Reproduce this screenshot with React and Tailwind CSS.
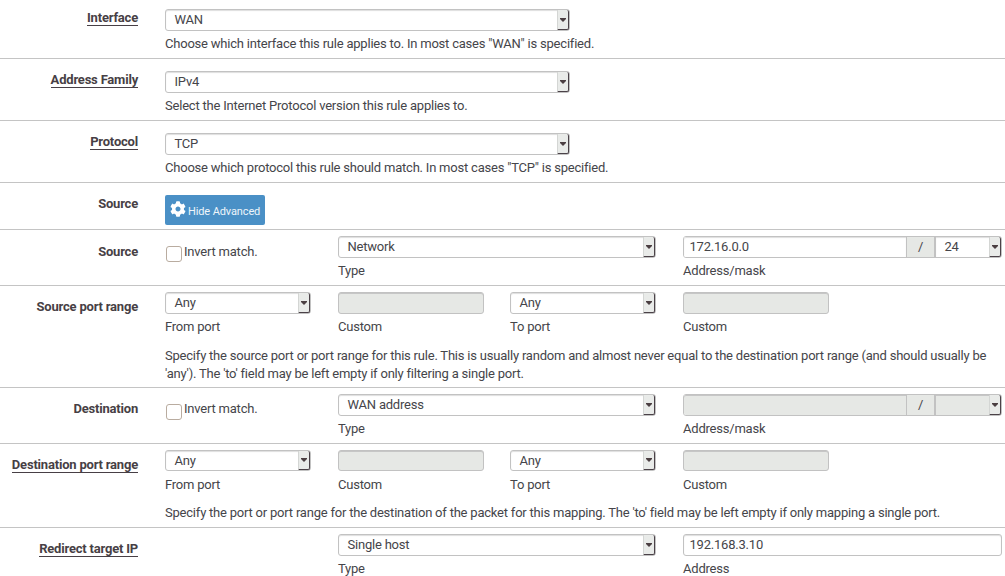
import React from "react";
import { FaCog } from "react-icons/fa";

function Arrow() {
  return (
    <span className="flex h-full w-3 shrink-0 items-center justify-center rounded-r-[2px] border-r border-b border-l border-r-[#4b4248] border-b-[#4b4248] border-l-[#d4d6d4] bg-[#e9ebe9]">
      <svg width="6" height="4" viewBox="0 0 6 4" fill="#4b3f42">
        <path d="M0 0h6v1L3 4L0 1z" />
      </svg>
    </span>
  );
}

function Select({ value, className = "", height = "h-[22px]" }) {
  return (
    <div className={`flex ${height} items-center justify-between rounded-[3px] border border-[#c2c2c2] bg-white pl-[8.5px] shadow-[inset_0_1px_1px_#dedede] ${className}`}>
      <span className="whitespace-nowrap leading-[18px]">{value}</span>
      <Arrow />
    </div>
  );
}

function Input({ value, disabled, className = "", height = "h-[22px]" }) {
  return (
    <div className={`flex ${height} items-center rounded-[3px] border border-[#c2c2c2] pl-[5.5px] leading-[18px] ${disabled ? "bg-[#e6e8e5] shadow-[inset_0_1px_0_#c6c6c6]" : "bg-white shadow-[inset_0_1px_1px_#dedede]"} ${className}`}>
      {value}
    </div>
  );
}

function AddressMask({ address, mask, disabled }) {
  const fill = disabled ? "bg-[#e6e8e5] shadow-[inset_0_1px_0_#c6c6c6]" : "bg-white shadow-[inset_0_1px_1px_#dedede]";
  return (
    <div className="flex h-[22px] w-[319px] rounded-[3px] border border-[#c2c2c2] leading-[18px]">
      <div className={`flex w-[222px] items-center rounded-l-[2px] pl-[5.5px] ${fill}`}>{address}</div>
      <div className="flex w-[30px] items-center justify-center border-r-2 border-l border-[#c2c2c2] bg-[#e6e8e5]">/</div>
      <div className={`flex flex-1 items-center justify-between pl-[8.5px] ${fill}`}>
        <span>{mask}</span>
        <Arrow />
      </div>
    </div>
  );
}

function Field({ caption, className = "", children }) {
  return (
    <div className={className}>
      {children}
      <p className="mt-1 h-[18px] whitespace-nowrap leading-[18px]">{caption}</p>
    </div>
  );
}

function Row({ label, underlined, height, labelPad, pad, last, children }) {
  return (
    <div className={`flex ${height} ${last ? "" : "border-b border-[#c4c4c4]"}`}>
      <div className={`w-[138px] shrink-0 text-right font-bold leading-[15px] tracking-[-0.2px] text-[#473f45] ${labelPad}`}>
        <span className={`inline-block whitespace-nowrap ${underlined ? "border-b border-[#473f45]" : ""}`}>{label}</span>
      </div>
      <div className={`ml-[27px] flex-1 ${pad}`}>{children}</div>
    </div>
  );
}

function InvertMatch({ textPad }) {
  return (
    <div className="flex w-[173px]">
      <span className="mt-[10px] ml-px h-4 w-4 rounded-[3px] border border-[#b9aca0] bg-white" />
      <span className={`ml-[2px] leading-[18px] ${textPad}`}>Invert match.</span>
    </div>
  );
}

function PortRange({ height }) {
  return (
    <div className="flex h-11">
      <Field caption="From port" className="flex w-[173px] flex-col justify-between"><Select value="Any" className="w-[146px]" height={height} /></Field>
      <Field caption="Custom" className="flex w-[172px] flex-col justify-between"><Input disabled className="w-[146px]" height={height} /></Field>
      <Field caption="To port" className="flex w-[173px] flex-col justify-between"><Select value="Any" className="w-[146px]" height={height} /></Field>
      <Field caption="Custom" className="flex flex-col justify-between"><Input disabled className="w-[146px]" height={height} /></Field>
    </div>
  );
}

export default function App() {
  return (
    <div className="h-[576px] w-[1005px] overflow-hidden bg-white font-[Roboto,sans-serif] text-[13px] tracking-[-0.212px] text-[#45454a]">
      <Row label="Interface" underlined height="h-[59px]" labelPad="pt-[10px]" pad="pt-[9px]">
        <Field caption={'Choose which interface this rule applies to. In most cases "WAN" is specified.'}>
          <Select value="WAN" className="w-[405px]" />
        </Field>
      </Row>
      <Row label="Address Family" underlined height="h-[62px]" labelPad="pt-[13px]" pad="pt-3">
        <Field caption="Select the Internet Protocol version this rule applies to.">
          <Select value="IPv4" className="w-[405px]" />
        </Field>
      </Row>
      <Row label="Protocol" underlined height="h-[62px]" labelPad="pt-[13px]" pad="pt-3">
        <Field caption={'Choose which protocol this rule should match. In most cases "TCP" is specified.'}>
          <Select value="TCP" className="w-[405px]" />
        </Field>
      </Row>
      <Row label="Source" height="h-[47px]" labelPad="pt-[13px]" pad="pt-3">
        <button className="flex h-[30px] w-[100px] items-center rounded-[2px] bg-[#4a90c6] pl-[5px] text-[11px] tracking-[-0.12px] text-[#eef5fa]">
          <FaCog className="mb-[3px] h-4 w-4 text-white" />
          <span className="mt-[3px] ml-[2px] whitespace-nowrap leading-[14px]">Hide Advanced</span>
        </button>
      </Row>
      <Row label="Source" height="h-[56px]" labelPad="pt-[14px]" pad="pt-1.5">
        <div className="flex">
          <InvertMatch textPad="mt-[7px]" />
          <Field caption="Type" className="w-[345px]"><Select value="Network" className="w-[318px]" /></Field>
          <Field caption="Address/mask"><AddressMask address="172.16.0.0" mask="24" /></Field>
        </div>
      </Row>
      <Row label="Source port range" height="h-[102px]" labelPad="pt-[13px]" pad="pt-1.5">
        <PortRange height="h-[22px]" />
        <p className="mt-[11px] whitespace-nowrap leading-[18px]">
          Specify the source port or port range for this rule. This is usually random and almost never equal to the destination port range (and should usually be<br />
          'any'). The 'to' field may be left empty if only filtering a single port.
        </p>
      </Row>
      <Row label="Destination" height="h-[56px]" labelPad="pt-[13px]" pad="pt-1.5">
        <div className="flex">
          <InvertMatch textPad="mt-[6px]" />
          <Field caption="Type" className="w-[345px]"><Select value="WAN address" className="w-[318px]" /></Field>
          <Field caption="Address/mask"><AddressMask disabled /></Field>
        </div>
      </Row>
      <Row label="Destination port range" underlined height="h-[84px]" labelPad="pt-[13px]" pad="pt-1.5">
        <PortRange height="h-[21px]" />
        <p className="mt-[10px] whitespace-nowrap leading-[18px]">
          Specify the port or port range for the destination of the packet for this mapping. The 'to' field may be left empty if only mapping a single port.
        </p>
      </Row>
      <Row label="Redirect target IP" underlined last height="h-[48px]" labelPad="pt-[13px]" pad="pt-1.5">
        <div className="flex">
          <Field caption="Type" className="ml-[173px] w-[345px]"><Select value="Single host" className="w-[318px]" /></Field>
          <Field caption="Address"><Input value="192.168.3.10" className="w-[319px]" /></Field>
        </div>
      </Row>
    </div>
  );
}
